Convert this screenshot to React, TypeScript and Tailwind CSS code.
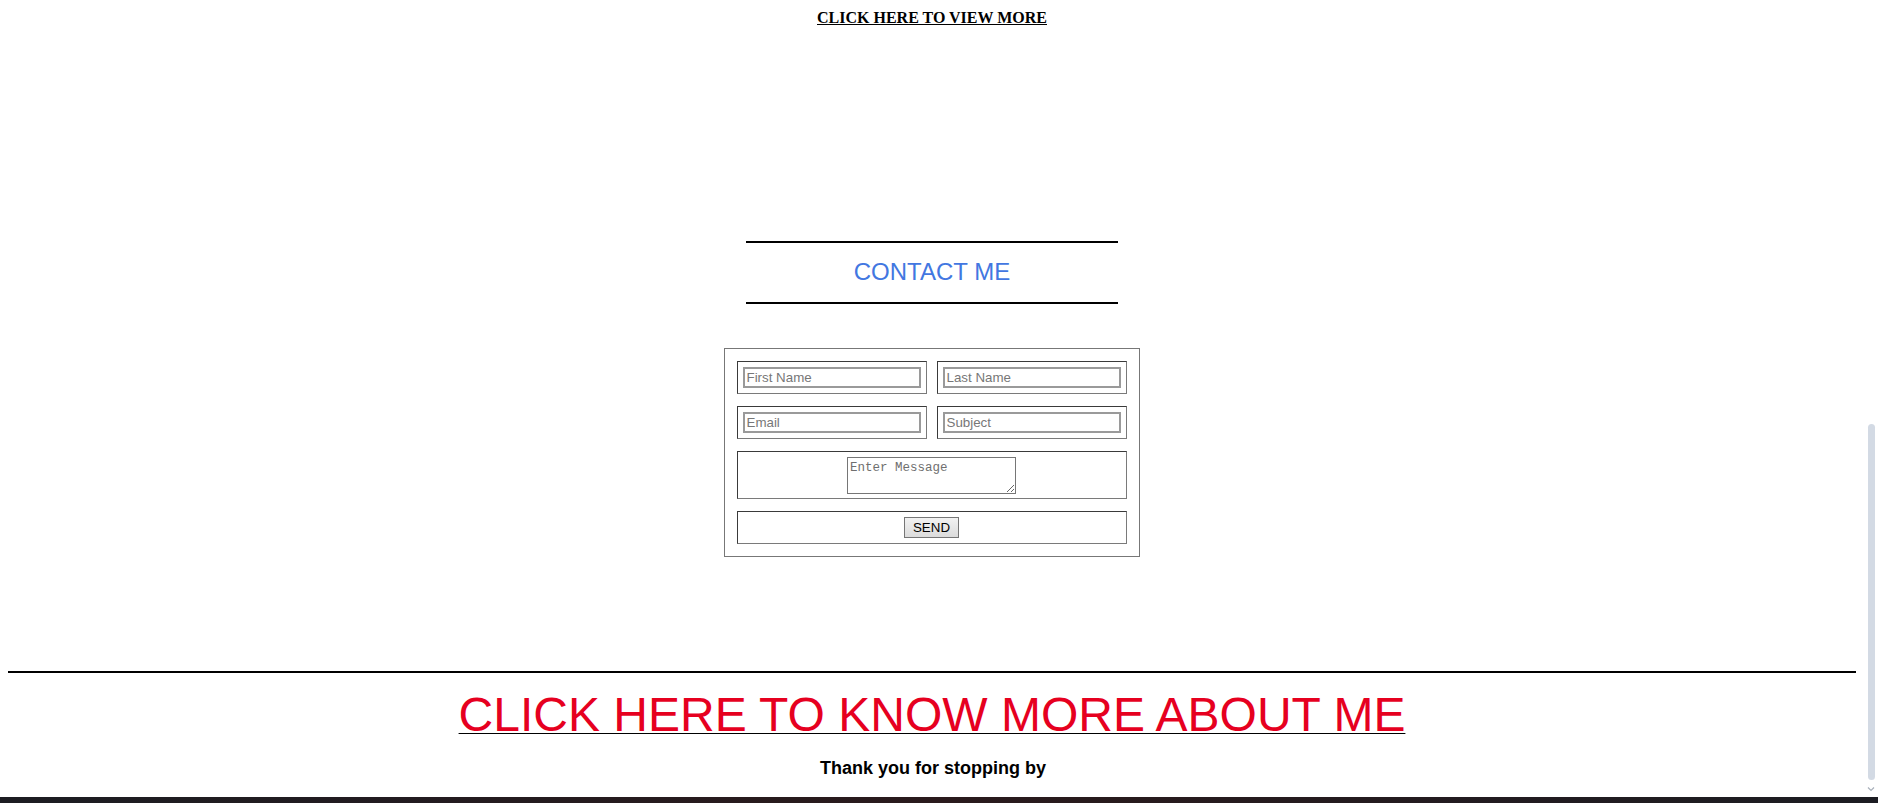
import React from "react";

const sans = { fontFamily: '"Liberation Sans", Arial, sans-serif' };

function Field({ placeholder }: { placeholder: string }) {
  return (
    <div className="w-[190px] h-[33px] p-[5px] border border-t-[#3a3a3a] border-l-[#3a3a3a] border-r-[#7a7a7a] border-b-[#7a7a7a]">
      <input
        placeholder={placeholder}
        className="block w-full h-[21px] border-2 border-[#9a9a9a] px-[2px] text-[13.33px] leading-[17px] text-black placeholder:text-[#777] outline-none bg-white"
        style={sans}
      />
    </div>
  );
}

export default function App() {
  return (
    <div className="w-[1878px] h-[803px] overflow-hidden bg-white flex flex-col">
      <div className="flex flex-row h-[797px]">
        <div className="w-[1864px] px-[8px] flex flex-col">
          <div className="pt-[9px] flex justify-center">
            <a
              href="#"
              className="text-[16px] leading-[18px] font-bold underline text-black"
              style={{ fontFamily: '"Liberation Serif", "Times New Roman", serif' }}
            >
              CLICK HERE TO VIEW MORE
            </a>
          </div>

          <div className="mt-[214px] w-[372px] mx-auto flex flex-col">
            <div className="h-[2px] bg-black" />
            <div
              className="mt-[15px] h-[28px] text-[24px] leading-[28px] text-center text-[#4277e1]"
              style={sans}
            >
              CONTACT ME
            </div>
            <div className="mt-[16px] h-[2px] bg-black" />
          </div>

          <div className="mt-[44px] flex justify-center pr-[1px]">
            <form
              className="w-[416px] border border-[#777] pt-[12px] pb-[12px] pl-[12px] pr-[12px] flex flex-col gap-[12px]"
              onSubmit={(e) => e.preventDefault()}
            >
              <div className="flex flex-row justify-between">
                <Field placeholder="First Name" />
                <Field placeholder="Last Name" />
              </div>
              <div className="flex flex-row justify-between">
                <Field placeholder="Email" />
                <Field placeholder="Subject" />
              </div>
              <div className="h-[48px] pt-[5px] border border-t-[#3a3a3a] border-l-[#3a3a3a] border-r-[#7a7a7a] border-b-[#7a7a7a] flex justify-center">
                <textarea
                  placeholder="Enter Message"
                  className="w-[169px] h-[37px] border border-[#767676] px-[2px] pt-[3px] text-[12.5px] leading-[15px] placeholder:text-[#6f6f6f] resize-y outline-none"
                  style={{ fontFamily: '"Liberation Mono", "Courier New", monospace' }}
                />
              </div>
              <div className="h-[33px] border border-t-[#3a3a3a] border-l-[#3a3a3a] border-r-[#7a7a7a] border-b-[#7a7a7a] flex items-center justify-center">
                <button
                  type="submit"
                  className="w-[55px] h-[21px] border border-[#767676] bg-gradient-to-b from-[#f2f2f2] to-[#dcdcdc] text-[13.33px] leading-[16px] text-black"
                  style={sans}
                >
                  SEND
                </button>
              </div>
            </form>
          </div>

          <div className="mt-[114px] h-[2px] bg-black" />

          <div className="mt-[15px] flex justify-center">
            <a
              href="#"
              className="text-[48px] leading-[54px] text-[#e6001f] underline decoration-black decoration-[1px] underline-offset-[2px]"
              style={sans}
            >
              CLICK HERE TO KNOW MORE ABOUT ME
            </a>
          </div>

          <div
            className="mt-[16px] text-[18px] leading-[21px] font-bold text-center text-black pl-[2px]"
            style={sans}
          >
            Thank you for stopping by
          </div>
        </div>

        <div className="w-[14px] flex flex-col items-center">
          <div className="mt-[424px] h-[356px] w-[7px] rounded-full bg-[#d3dae4]" />
          <svg className="mt-[6px]" width="8" height="6" viewBox="0 0 8 6">
            <path d="M1 1.5 L4 4.5 L7 1.5" fill="none" stroke="#a8b0ba" strokeWidth="1.2" />
          </svg>
        </div>
      </div>
      <div className="h-[6px] bg-gradient-to-r from-[#1c1c22] via-[#2a1a1c] to-[#1c1c22]" />
    </div>
  );
}
